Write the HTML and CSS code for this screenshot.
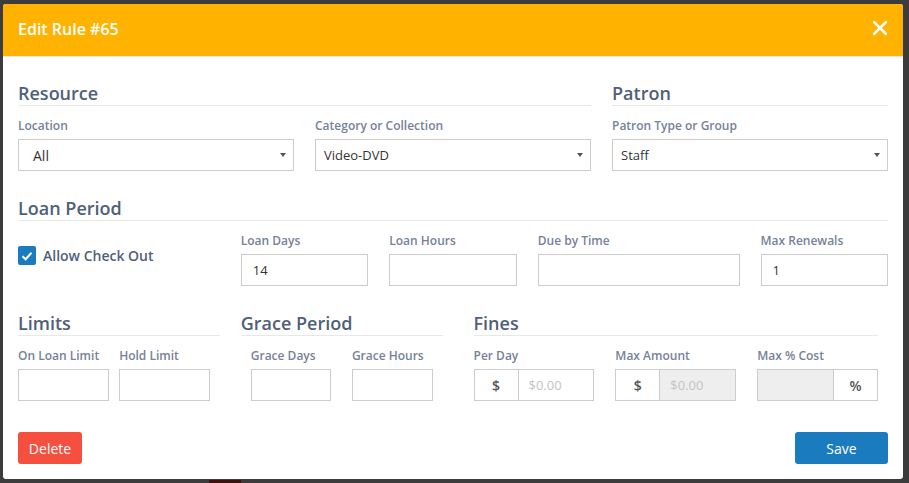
FILE: index.html
```html
<!DOCTYPE html>
<html lang="en">
<head>
<meta charset="utf-8">
<title>Edit Rule #65</title>
<link rel="stylesheet" href="styles.css">
</head>
<body>
<div class="backdrop-mark"></div>
<div class="modal">
  <header class="modal-header">
    <h2 class="modal-title">Edit Rule #65</h2>
    <button class="close" aria-label="Close">
      <svg width="14" height="14" viewBox="0 0 14 14"><path d="M1 1L13 13M13 1L1 13" stroke="#fff" stroke-width="2.6" stroke-linecap="square"/></svg>
    </button>
  </header>
  <div class="modal-body">
    <div class="row">
      <section class="span-8">
        <h3 class="section-title">Resource</h3>
        <div class="pair">
          <div class="field">
            <label class="label">Location</label>
            <div class="select select-wide"><span>All</span><i class="caret"></i></div>
          </div>
          <div class="field">
            <label class="label">Category or Collection</label>
            <div class="select"><span>Video-DVD</span><i class="caret"></i></div>
          </div>
        </div>
      </section>
      <section class="span-4">
        <h3 class="section-title">Patron</h3>
        <div class="field">
          <label class="label">Patron Type or Group</label>
          <div class="select"><span>Staff</span><i class="caret"></i></div>
        </div>
      </section>
    </div>

    <section class="loan">
      <h3 class="section-title">Loan Period</h3>
      <div class="row">
        <div class="span-3 check-col">
          <span class="checkbox"><svg width="12" height="10" viewBox="0 0 12 10"><path d="M1.5 5.2L4.6 8.2L10.5 1.8" fill="none" stroke="#fff" stroke-width="2"/></svg></span>
          <span class="check-label">Allow Check Out</span>
        </div>
        <div class="span-2 field">
          <label class="label">Loan Days</label>
          <div class="input">14</div>
        </div>
        <div class="span-2 field">
          <label class="label">Loan Hours</label>
          <div class="input"></div>
        </div>
        <div class="span-3 field">
          <label class="label">Due by Time</label>
          <div class="input"></div>
        </div>
        <div class="span-2 field">
          <label class="label">Max Renewals</label>
          <div class="input">1</div>
        </div>
      </div>
    </section>

    <div class="row bottom-row">
      <section class="span-3">
        <h3 class="section-title">Limits</h3>
        <div class="grid-limits">
          <div class="field">
            <label class="label">On Loan Limit</label>
            <div class="input"></div>
          </div>
          <div class="field">
            <label class="label">Hold Limit</label>
            <div class="input"></div>
          </div>
        </div>
      </section>
      <section class="span-3">
        <h3 class="section-title">Grace Period</h3>
        <div class="grid-grace">
          <div class="field">
            <label class="label">Grace Days</label>
            <div class="input"></div>
          </div>
          <div class="field">
            <label class="label">Grace Hours</label>
            <div class="input"></div>
          </div>
        </div>
      </section>
      <section class="span-6 fines">
        <h3 class="section-title">Fines</h3>
        <div class="grid-fines">
          <div class="field">
            <label class="label">Per Day</label>
            <div class="group">
              <span class="addon">$</span>
              <span class="input grouped placeholder">$0.00</span>
            </div>
          </div>
          <div class="field">
            <label class="label">Max Amount</label>
            <div class="group">
              <span class="addon">$</span>
              <span class="input grouped disabled placeholder">$0.00</span>
            </div>
          </div>
          <div class="field">
            <label class="label">Max % Cost</label>
            <div class="group">
              <span class="input grouped-left disabled"></span>
              <span class="addon addon-right">%</span>
            </div>
          </div>
        </div>
      </section>
    </div>

    <footer class="modal-footer">
      <button class="btn btn-delete">Delete</button>
      <button class="btn btn-save">Save</button>
    </footer>
  </div>
</div>
</body>
</html>
```

FILE: styles.css
```css
* { box-sizing: border-box; }

html, body {
  margin: 0;
  height: 100%;
}

body {
  background: #3c3c3c;
  font-family: "Open Sans", "Liberation Sans", sans-serif;
  padding: 4px 0 0 3px;
  overflow: hidden;
  position: relative;
}

.backdrop-mark {
  position: absolute;
  left: 209px;
  top: 480px;
  width: 32px;
  height: 4px;
  background: #3e1010;
}

.modal {
  width: 900px;
  height: 475px;
  background: #fff;
  border-radius: 3px;
  overflow: hidden;
}

.modal-header {
  height: 53px;
  background: #ffb300;
  border-bottom: 1px solid #e5e5e5;
  display: flex;
  align-items: center;
  justify-content: space-between;
  padding: 0 15px;
}

.modal-title {
  margin: 0 0 2px;
  color: #fff;
  font-size: 16px;
  font-weight: 600;
  line-height: 22px;
}

.close {
  background: none;
  border: 0;
  padding: 0;
  margin: 0 1px 4px 0;
  width: 14px;
  height: 14px;
  display: block;
}
.close svg { display: block; }

.modal-body {
  padding: 24px 15px 0;
}

.row {
  display: grid;
  grid-template-columns: repeat(12, 1fr);
  column-gap: 21px;
}

.span-2 { grid-column: span 2; }
.span-3 { grid-column: span 3; }
.span-4 { grid-column: span 4; }
.span-6 { grid-column: span 6; }
.span-8 { grid-column: span 8; }

.section-title {
  margin: 0;
  font-size: 18px;
  line-height: 24px;
  font-weight: 600;
  color: #506079;
  border-bottom: 1px solid #e8e8e8;
}

.pair {
  display: grid;
  grid-template-columns: 1fr 1fr;
  column-gap: 21px;
}

.label {
  display: block;
  margin: 12px 0 5px;
  font-size: 12px;
  line-height: 16px;
  font-weight: 600;
  color: #75829a;
}

.select {
  height: 32px;
  border: 1px solid #cccccc;
  display: flex;
  align-items: center;
  justify-content: space-between;
  padding: 0 7px 0 8px;
  font-size: 13px;
  color: #333;
}

.select-wide {
  padding-left: 14px;
  font-size: 14px;
}

.caret {
  width: 0;
  height: 0;
  border-left: 3.5px solid transparent;
  border-right: 3.5px solid transparent;
  border-top: 4.5px solid #555;
}

.loan { margin-top: 25px; }

.check-col {
  display: flex;
  align-items: center;
  gap: 7px;
  margin-top: 25px;
  align-self: start;
}

.checkbox {
  width: 18px;
  height: 19px;
  border-radius: 2px;
  background: #1b7bbf;
  display: flex;
  align-items: center;
  justify-content: center;
}

.check-label {
  font-size: 14px;
  font-weight: 600;
  color: #506079;
}

.input {
  display: flex;
  align-items: center;
  height: 32px;
  border: 1px solid #cccccc;
  padding: 0 11px;
  font-size: 13px;
  color: #333;
  background: #fff;
}

.bottom-row { margin-top: 25px; }

.grid-limits {
  display: grid;
  grid-template-columns: 1fr 1fr;
  column-gap: 10.5px;
  padding-right: 10px;
}

.grid-grace {
  display: grid;
  grid-template-columns: 1fr 1fr;
  column-gap: 20.5px;
  padding: 0 10px;
}

.fines { padding: 0 10px; }

.grid-fines {
  display: grid;
  grid-template-columns: repeat(3, 1fr);
  column-gap: 21px;
}

.group {
  display: flex;
  height: 32px;
}

.addon {
  width: 45px;
  flex: none;
  border: 1px solid #cccccc;
  display: flex;
  align-items: center;
  justify-content: center;
  font-size: 14px;
  font-weight: 600;
  color: #555;
  background: #fff;
}

.grouped {
  flex: 1;
  margin-left: -1px;
  padding-left: 10px;
}

.grouped-left {
  flex: 1;
}

.addon-right { margin-left: -1px; }

.disabled { background: #eeeeee; }

.placeholder { color: #c4c4c4; font-size: 13px; }

.modal-footer {
  margin-top: 31px;
  display: flex;
  justify-content: space-between;
}

.btn {
  height: 32px;
  border: 0;
  border-radius: 3px;
  color: #fff;
  font-family: "Open Sans", "Liberation Sans", sans-serif;
  font-size: 14px;
  padding: 0;
}

.btn-delete {
  width: 64px;
  background: #f5503f;
}

.btn-save {
  width: 93px;
  background: #1b7bbf;
}
```
